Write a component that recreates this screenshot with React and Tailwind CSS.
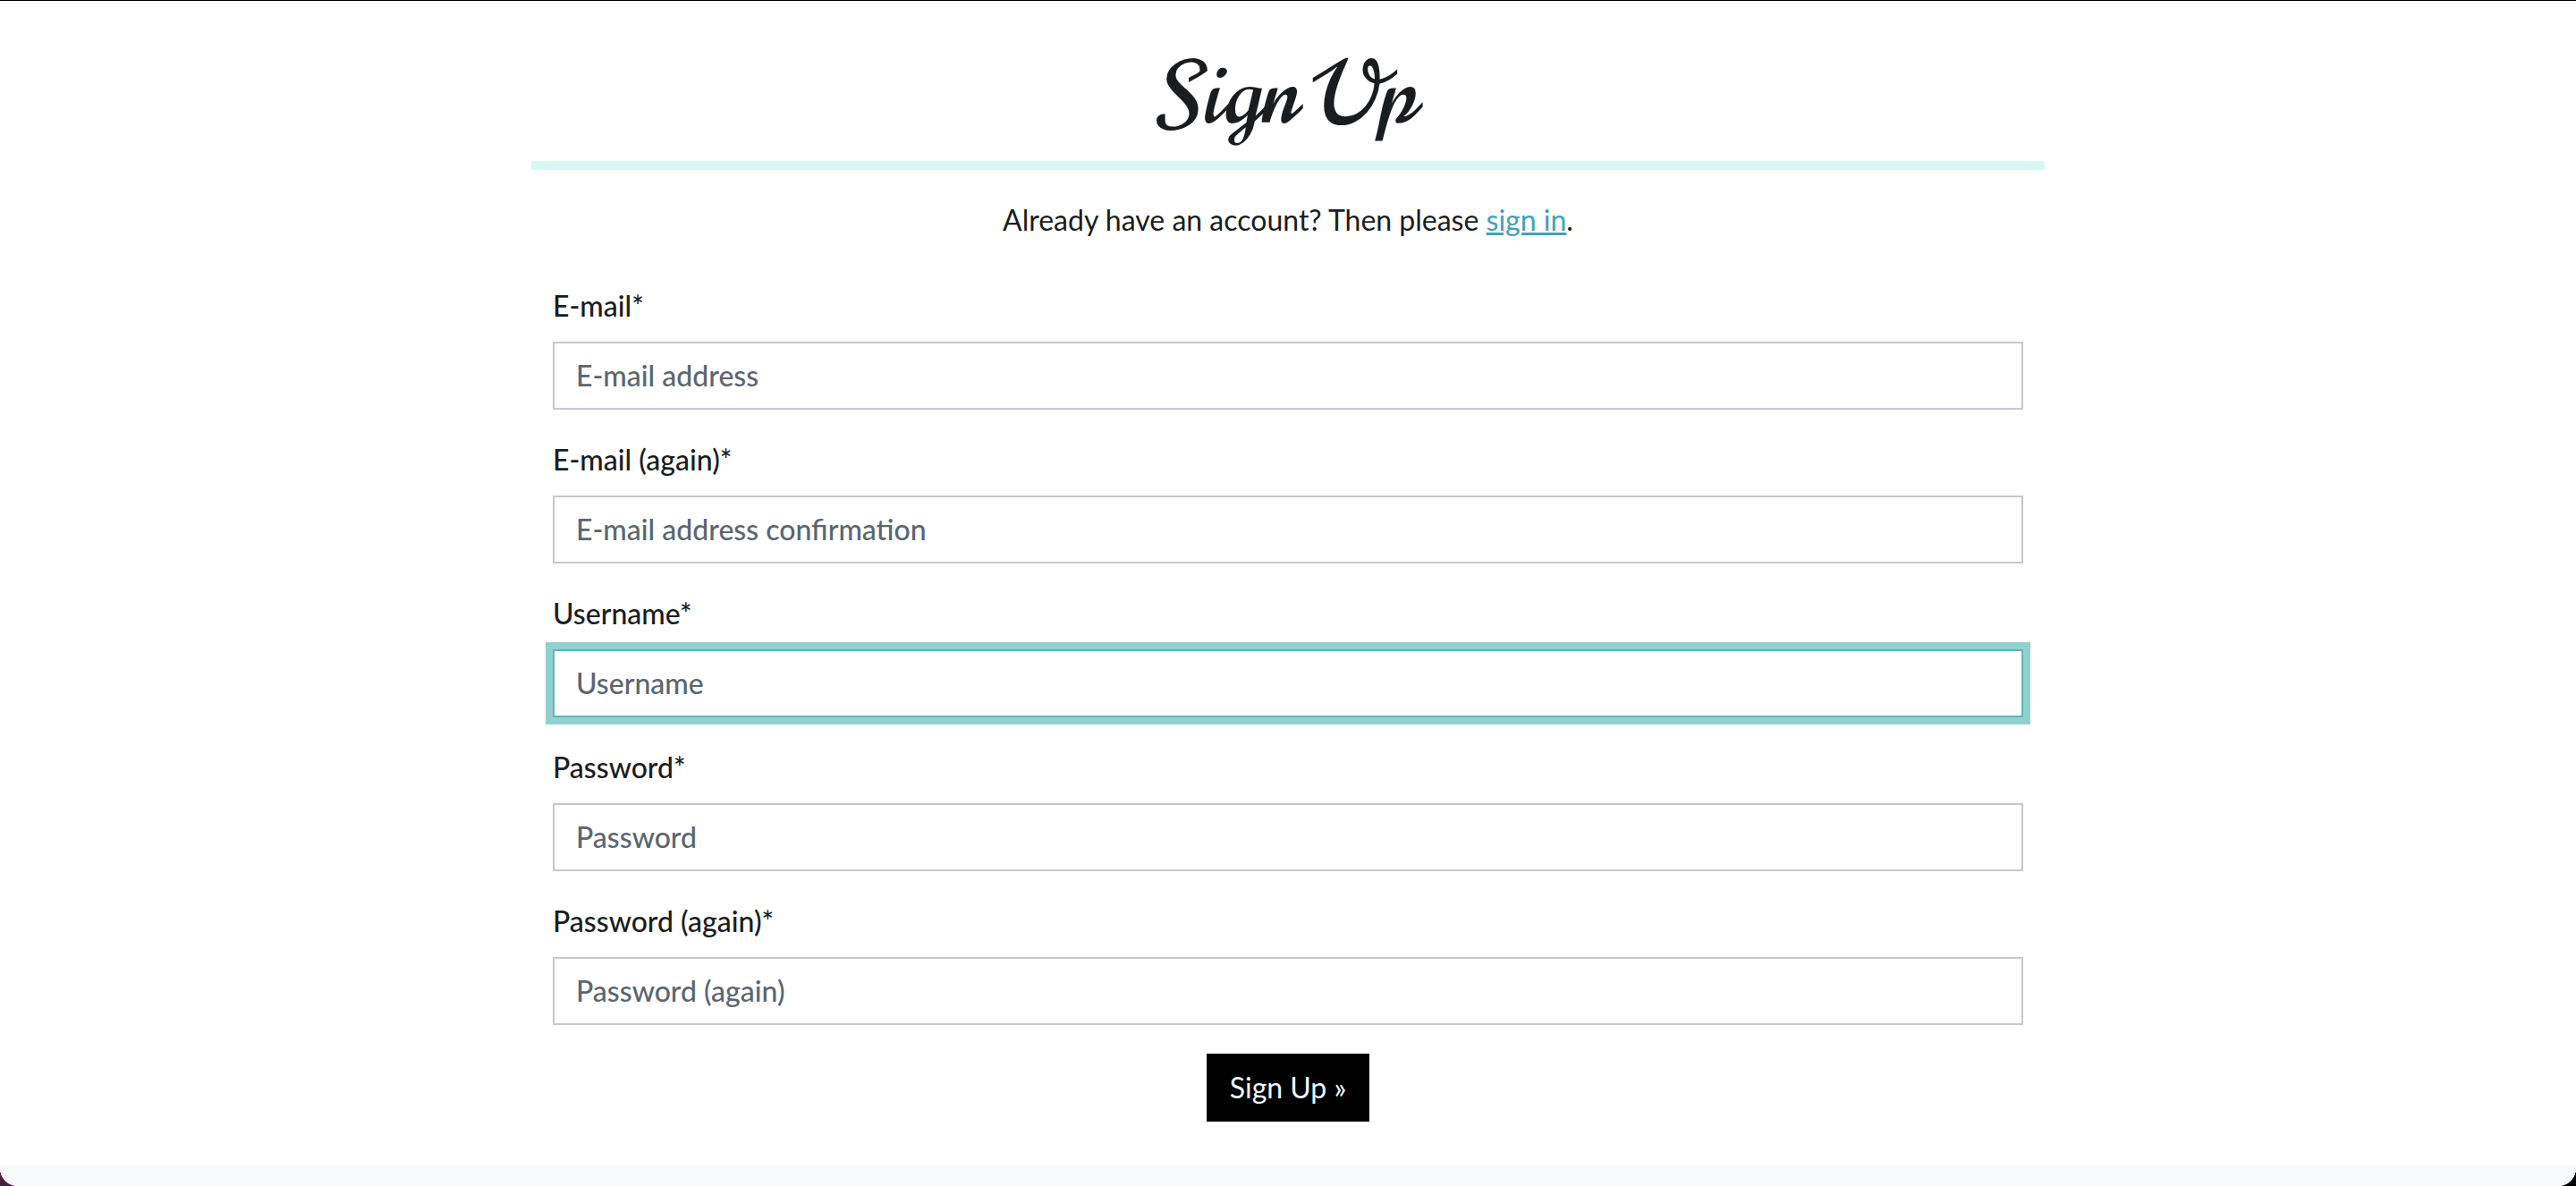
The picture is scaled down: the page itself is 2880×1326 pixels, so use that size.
const fields = [
  { id: "email", label: "E-mail*", placeholder: "E-mail address", type: "email" },
  { id: "email2", label: "E-mail (again)*", placeholder: "E-mail address confirmation", type: "email" },
  { id: "username", label: "Username*", placeholder: "Username", type: "text", active: true },
  { id: "password1", label: "Password*", placeholder: "Password", type: "password" },
  { id: "password2", label: "Password (again)*", placeholder: "Password (again)", type: "password" },
];

function Field({ id, label, placeholder, type, active }) {
  return (
    <div className="mb-8">
      <label htmlFor={id} className="mb-4 block font-medium">
        {label}
      </label>
      <input
        id={id}
        name={id}
        type={type}
        placeholder={placeholder}
        className={
          "block w-full border-2 bg-white px-6 py-3 font-medium outline-none placeholder:text-[#5b6670] placeholder:opacity-100 " +
          (active ? "border-[#5ab8b7] ring-8 ring-[#92d0d0]" : "border-[#c4c8d2]")
        }
      />
    </div>
  );
}

export default function App() {
  return (
    <div className="min-h-screen bg-linear-to-r from-[#4a1f3d] to-black">
      <div className="flex min-h-screen flex-col overflow-hidden rounded-b-[20px] border-t border-black bg-white font-['Lato',sans-serif] text-[32px] leading-[48px] text-[#1a1d20]">
        <main className="mx-auto w-full max-w-[1692px] grow">
          <h1 className="border-b-10 border-[#d9f8f3] pt-12 pb-4 text-center font-['Norican','Liberation_Serif',cursive] text-[96px] leading-[115px] font-medium">
            Sign Up
          </h1>
          <div className="px-6 pt-8 pb-12">
            <p className="mb-12 text-center">
              Already have an account? Then please{" "}
              <a href="#signin" className="text-[#3fa2b8] underline">
                sign in
              </a>
              .
            </p>
            <form>
              {fields.map((field) => (
                <Field key={field.id} {...field} />
              ))}
              <div className="flex justify-center">
                <button type="button" className="border-2 border-black bg-black px-6 py-3 text-[#f0f8ff]">
                  Sign Up »
                </button>
              </div>
            </form>
          </div>
        </main>
        <footer className="h-6 bg-[#f7f9fb]" />
      </div>
    </div>
  );
}
